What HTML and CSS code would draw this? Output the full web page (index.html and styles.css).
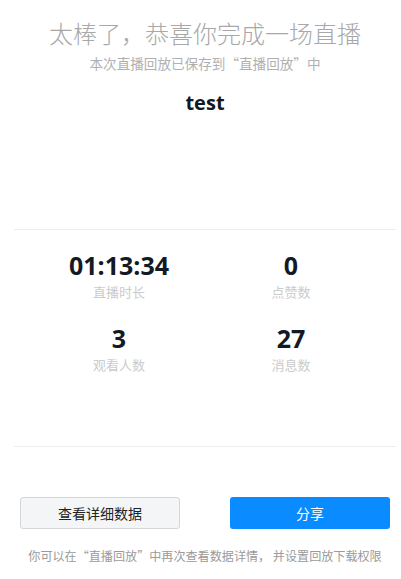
FILE: index.html
```html
<!DOCTYPE html>
<html lang="zh-CN">
<head>
<meta charset="utf-8">
<link rel="stylesheet" href="styles.css">
</head>
<body>
<div class="page">
  <header class="head">
    <h1 class="title">太棒了，恭喜你完成一场直播</h1>
    <p class="sub">本次直播回放已保存到“直播回放”中</p>
    <p class="name">test</p>
  </header>
  <div class="rule"></div>
  <section class="stats">
    <div class="stat"><div class="val">01:13:34</div><div class="lbl">直播时长</div></div>
    <div class="stat"><div class="val">0</div><div class="lbl">点赞数</div></div>
    <div class="stat"><div class="val">3</div><div class="lbl">观看人数</div></div>
    <div class="stat"><div class="val">27</div><div class="lbl">消息数</div></div>
  </section>
  <div class="rule rule2"></div>
  <div class="actions">
    <button class="btn btn-ghost">查看详细数据</button>
    <button class="btn btn-primary">分享</button>
  </div>
  <p class="foot">你可以在“直播回放”中再次查看数据详情， 并设置回放下载权限</p>
</div>
</body>
</html>
```
FILE: styles.css
```css
* { box-sizing: border-box; }
html, body { margin: 0; padding: 0; background: #fff; }
body {
  font-family: "Noto Sans CJK SC", "Noto Sans", sans-serif;
  width: 401px;
  height: 579px;
  overflow: hidden;
}
.page { display: flex; flex-direction: column; width: 410px; }
.head { display: flex; flex-direction: column; align-items: center; padding-top: 17px; }
.title {
  margin: 0;
  font-size: 24px;
  line-height: 32px;
  font-weight: 300;
  color: #a8a8a8;
}
.sub {
  margin: 4px 0 0;
  font-size: 13.6px;
  line-height: 20px;
  color: #b0b0b0;
}
.name {
  margin: 16px 0 0;
  font-family: "Open Sans", "Noto Sans", sans-serif;
  font-size: 20px;
  line-height: 28px;
  font-weight: 700;
  color: #111820;
}
.rule {
  height: 1px;
  background: #eeeeee;
  margin: 112px 14px 0;
}
.rule2 { margin-top: 71px; }
.stats {
  display: grid;
  grid-template-columns: 172px 172px;
  justify-content: center;
  row-gap: 20px;
  margin-top: 19px;
}
.stat { display: flex; flex-direction: column; align-items: center; }
.val {
  font-family: "Open Sans", "Noto Sans", sans-serif;
  font-size: 25px;
  line-height: 32px;
  font-weight: 700;
  color: #121a24;
}
.lbl {
  margin-top: 1px;
  font-size: 13px;
  line-height: 20px;
  color: #cbcbcb;
}
.actions {
  display: flex;
  justify-content: space-between;
  padding: 0 20px;
  margin-top: 50px;
}
.btn {
  width: 160px;
  height: 32px;
  border-radius: 3px;
  font-family: "Noto Sans CJK SC", sans-serif;
  font-size: 14px;
  padding: 0;
  cursor: pointer;
}
.btn-ghost {
  background: #f4f5f6;
  border: 1px solid #d6d6d6;
  color: #222;
}
.btn-primary {
  background: #0a8bff;
  border: none;
  color: #fff;
}
.foot {
  margin: 18px 0 0;
  text-align: center;
  font-size: 12.1px;
  line-height: 18px;
  color: #9a9a9a;
}
```
